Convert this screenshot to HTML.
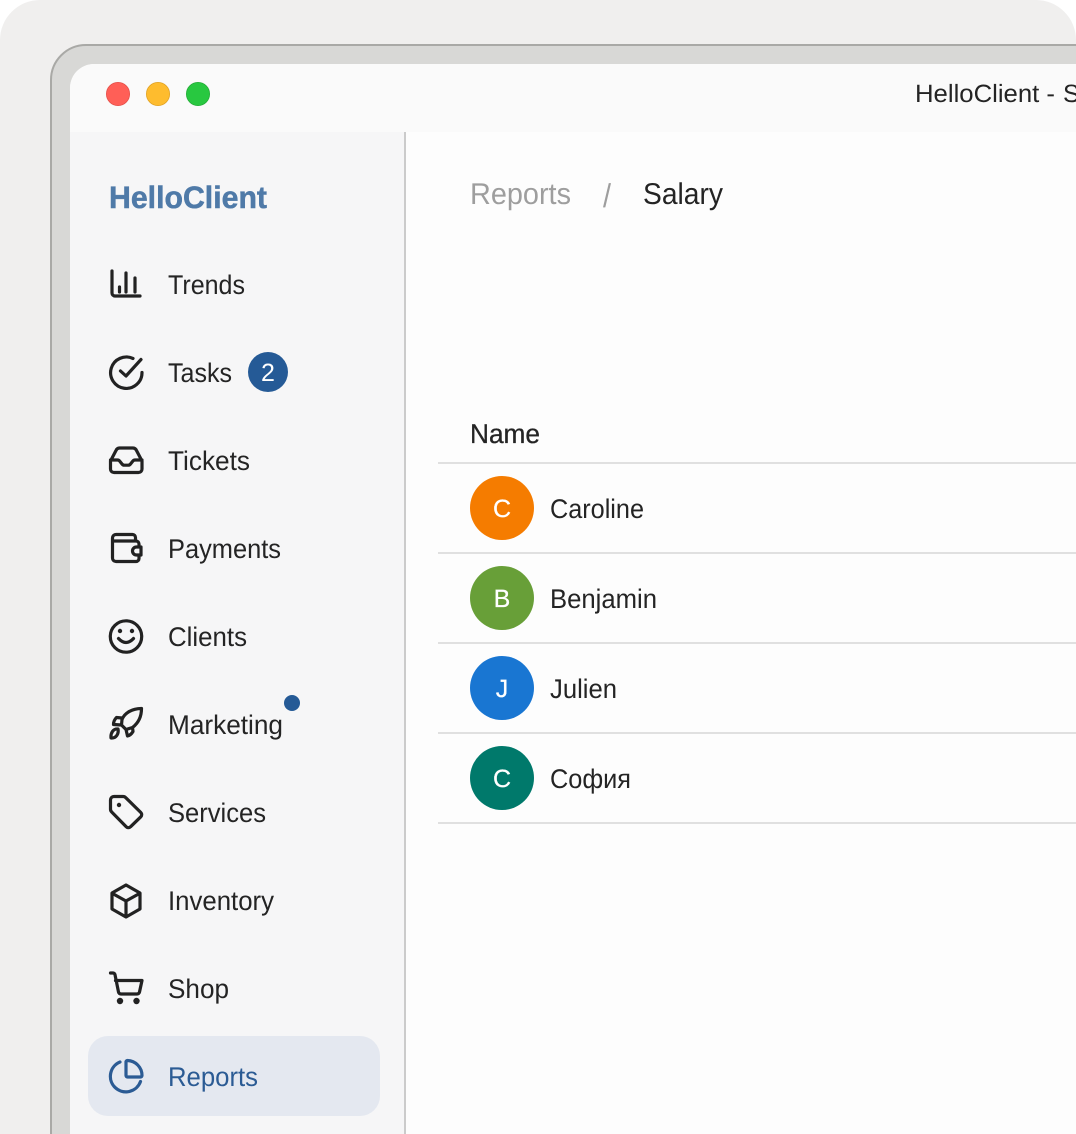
<!DOCTYPE html>
<html lang="en">
<head>
<meta charset="utf-8">
<title>HelloClient - Salary</title>
<style>
html,body{margin:0;padding:0;background:#fff;width:1076px;height:1134px;overflow:hidden}
svg{display:block}
text{font-family:"Liberation Sans",sans-serif;fill:#242424;font-size:27px;text-rendering:geometricPrecision}
.i{fill:none;stroke:#222;stroke-width:3.2;stroke-linecap:round;stroke-linejoin:round}
.l{stroke:#e0e0e0;stroke-width:2}
</style>
</head>
<body>
<svg xmlns="http://www.w3.org/2000/svg" width="1076" height="1134" viewBox="0 0 1076 1134">
  <rect width="1076" height="1134" fill="#fff"/>
  <path d="M0 1134V40A40 40 0 0 1 40 0H1036A40 40 0 0 1 1076 40V1134Z" fill="#f0efee"/>
  <path d="M51 1144V80A35 35 0 0 1 86 45H1086V1144Z" fill="#d8d8d6" stroke="#a9a9a6" stroke-width="2"/>
  <path d="M70 1134V88A24 24 0 0 1 94 64H1076V1134Z" fill="#f6f6f7"/>
  <path d="M70 132V88A24 24 0 0 1 94 64H1076V132Z" fill="#fafafa"/>
  <rect x="406" y="132" width="670" height="1002" fill="#fdfdfd"/>
  <rect x="404" y="132" width="2" height="1002" fill="#cbcbcb"/>

  <circle cx="118" cy="94" r="11.6" fill="#ff5f57" stroke="#e5504a" stroke-width=".8"/>
  <circle cx="158" cy="94" r="11.6" fill="#febc2e" stroke="#e1a325" stroke-width=".8"/>
  <circle cx="198" cy="94" r="11.6" fill="#28c840" stroke="#24ad38" stroke-width=".8"/>
  <text x="915" y="102" style="font-size:25px" textLength="140" lengthAdjust="spacingAndGlyphs">HelloClient -</text>
  <text x="1063" y="102" style="font-size:25px">Salary</text>

  <text x="109" y="208" style="font-size:31px;font-weight:700;fill:#4f7aa8;stroke:#4f7aa8;stroke-width:.5" textLength="158" lengthAdjust="spacingAndGlyphs">HelloClient</text>

  <text x="168" y="294" textLength="77" lengthAdjust="spacingAndGlyphs">Trends</text>
  <text x="168" y="382" textLength="64" lengthAdjust="spacingAndGlyphs">Tasks</text>
  <text x="168" y="470" textLength="82" lengthAdjust="spacingAndGlyphs">Tickets</text>
  <text x="168" y="558" textLength="113" lengthAdjust="spacingAndGlyphs">Payments</text>
  <text x="168" y="646" textLength="79" lengthAdjust="spacingAndGlyphs">Clients</text>
  <text x="168" y="734" textLength="115" lengthAdjust="spacingAndGlyphs">Marketing</text>
  <text x="168" y="822" textLength="98" lengthAdjust="spacingAndGlyphs">Services</text>
  <text x="168" y="910" textLength="106" lengthAdjust="spacingAndGlyphs">Inventory</text>
  <text x="168" y="998" textLength="61" lengthAdjust="spacingAndGlyphs">Shop</text>
  <rect x="88" y="1036" width="292" height="80" rx="20" fill="#e4e8f0"/>
  <text x="168" y="1086" style="fill:#2b5b94" textLength="90" lengthAdjust="spacingAndGlyphs">Reports</text>

  <circle cx="268" cy="372" r="20" fill="#255a96"/>
  <text x="268" y="381" text-anchor="middle" style="font-size:25px;fill:#fff">2</text>
  <circle cx="292" cy="703" r="8" fill="#255a96"/>

  <path class="i" d="M112 271V293a3 3 0 0 0 3 3H140M119.500 287V292M126 273V292M135 278V292"/>
  <path class="i" d="M142 372.500A15.700 15.700 0 1 1 133 358.500M120.500 371L126 376L141 359.500"/>
  <path class="i" d="M110.500 461V469a3.500 3.500 0 0 0 3.500 3.500H138.500a3.500 3.500 0 0 0 3.500-3.500V461L136.500 450.500a4 4 0 0 0-3.500-2.500H119.500a4 4 0 0 0-3.500 2.500ZM110.500 460H117.500a3 3 0 0 1 2.300 1.200L122 464a3 3 0 0 0 2.300 1.200H128.200a3 3 0 0 0 2.300-1.200L132.700 461.200A3 3 0 0 1 135 460H142"/>
  <path class="i" d="M112.500 541H136a3 3 0 0 1 3 3V547M139 555V558.500a3 3 0 0 1-3 3H116a3.500 3.500 0 0 1-3.500-3.500V538a3.500 3.500 0 0 1 3.500-3.500H132.500a3 3 0 0 1 3 3V541M136.500 547H141V555H136.500a4 4 0 0 1 0-8Z"/>
  <circle class="i" cx="126" cy="636.500" r="15.700"/>
  <circle cx="120" cy="631" r="2.200" fill="#222"/><circle cx="132" cy="631" r="2.200" fill="#222"/>
  <path class="i" d="M118.500 638.500Q126 646.500 133.500 638.500"/>
  <path class="i" d="M141.500 708.500C132 708.500 124.500 713 122 719.500L121.500 725L126 729.500L132.500 727.500C139 722.500 141.500 716 141.500 708.500ZM122 718L116.500 717.500C114.500 719.500 113.500 722 113.500 724.500L121.500 725M132.500 727.500L133 731.500C131.500 734 129.500 735.500 127.500 736L126 729.500M118 729C113.500 728.500 110.500 732.500 111 738C116 738.500 119 734 118 729Z"/>
  <path class="i" d="M110.500 800a3.500 3.500 0 0 1 3.500-3.500H123a4 4 0 0 1 2.800 1.200L140.800 812.500a3 3 0 0 1 0 4.300L130.500 826.800a3 3 0 0 1-4.300 0L111.700 812a4 4 0 0 1-1.200-2.800Z"/>
  <circle cx="119" cy="805" r="2.200" fill="#222"/>
  <path class="i" d="M126 885L140 893V909L126 917L112 909V893ZM112.500 893.500L126 901L139.500 893.500M126 901V916"/>
  <path class="i" d="M110.500 973H113a2 2 0 0 1 2 1.700L118.500 992a2.500 2.500 0 0 0 2.500 2H137a2.500 2.500 0 0 0 2.500-2L142 980.500H115.500"/>
  <circle cx="120" cy="1001" r="3.200" fill="#222"/><circle cx="136.500" cy="1001" r="3.200" fill="#222"/>
  <path class="i" style="stroke:#2b5b94" d="M120 1062A15.500 15.500 0 1 0 140.500 1081.500M126 1062a1.500 1.500 0 0 1 1.500-1.500A15 15 0 0 1 142 1075.500a1.500 1.500 0 0 1-1.500 1.500H127.500A1.500 1.500 0 0 1 126 1075.500Z"/>

  <text x="470" y="204" style="font-size:30px;fill:#9e9e9e" textLength="101" lengthAdjust="spacingAndGlyphs">Reports</text>
  <text x="603" y="207" style="font-size:33px;fill:#9e9e9e" textLength="8" lengthAdjust="spacingAndGlyphs">/</text>
  <text x="643" y="204" style="font-size:30px" textLength="80" lengthAdjust="spacingAndGlyphs">Salary</text>

  <text x="470" y="443" style="stroke:#242424;stroke-width:.3" textLength="70" lengthAdjust="spacingAndGlyphs">Name</text>
  <path class="l" d="M438 463H1076M438 553H1076M438 643H1076M438 733H1076M438 823H1076"/>

  <circle cx="502" cy="508" r="32" fill="#f57c00"/>
  <text x="502" y="517" text-anchor="middle" style="font-size:25px;fill:#fff;stroke:#fff;stroke-width:.25">C</text>
  <text x="550" y="518" textLength="94" lengthAdjust="spacingAndGlyphs">Caroline</text>
  <circle cx="502" cy="598" r="32" fill="#689f38"/>
  <text x="502" y="607" text-anchor="middle" style="font-size:25px;fill:#fff;stroke:#fff;stroke-width:.25">B</text>
  <text x="550" y="608" textLength="107" lengthAdjust="spacingAndGlyphs">Benjamin</text>
  <circle cx="502" cy="688" r="32" fill="#1976d2"/>
  <text x="502" y="697" text-anchor="middle" style="font-size:25px;fill:#fff;stroke:#fff;stroke-width:.25">J</text>
  <text x="550" y="698" textLength="67" lengthAdjust="spacingAndGlyphs">Julien</text>
  <circle cx="502" cy="778" r="32" fill="#00796b"/>
  <text x="502" y="787" text-anchor="middle" style="font-size:25px;fill:#fff;stroke:#fff;stroke-width:.25">С</text>
  <text x="550" y="788" textLength="81" lengthAdjust="spacingAndGlyphs">София</text>
</svg>
</body>
</html>
